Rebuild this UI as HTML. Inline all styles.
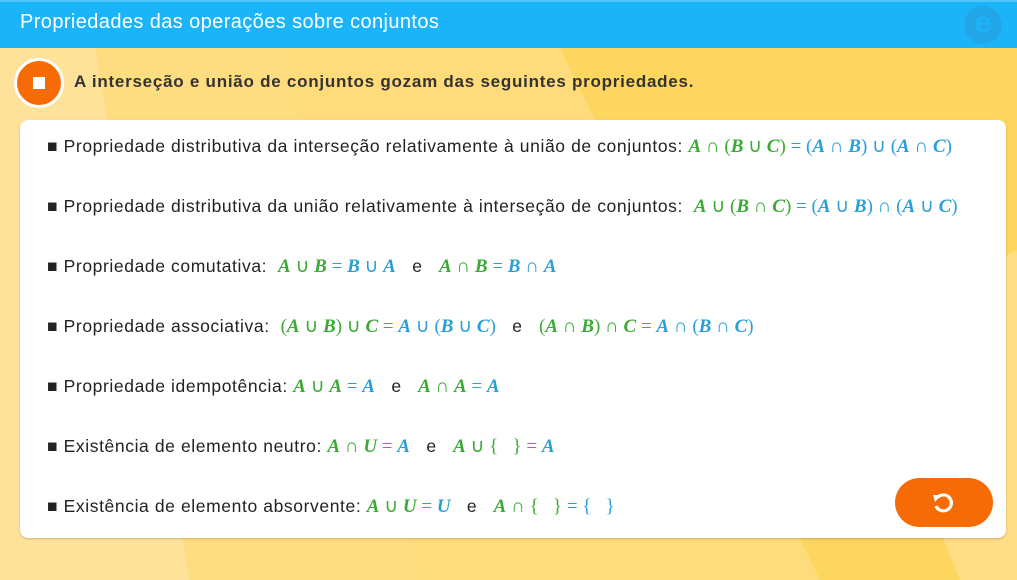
<!DOCTYPE html>
<html><head><meta charset="utf-8"><style>
body{margin:0;width:1017px;height:580px;overflow:hidden;font-family:"Liberation Sans",sans-serif;position:relative;background:#fdd660}
.bg{position:absolute;inset:0;overflow:hidden}
.hdr{position:absolute;left:0;top:0;width:1017px;height:48px;background:#1cb4f9;border-top:2px solid #4fc6f7;box-sizing:border-box}
.hdr span{position:absolute;left:20px;top:9px;color:#fff;font-size:20px;letter-spacing:0.4px}
.logo{position:absolute;left:964px;top:4px;width:38px;height:38px;border-radius:50%;background:#22a6e8;color:#1cb4f9;font-weight:bold;font-size:30px;text-align:center;line-height:34px}
.circ{position:absolute;left:14px;top:58px;width:44px;height:44px;border-radius:50%;background:#f76b07;border:3px solid #fff;box-sizing:content-box}
.circ i{position:absolute;left:16px;top:16px;width:12px;height:12px;background:#fff}
.title{position:absolute;left:74px;top:72px;font-size:17px;font-weight:bold;color:#333;letter-spacing:0.75px}
.card{position:absolute;left:20px;top:120px;width:986px;height:418px;background:#fff;border-radius:8px;box-shadow:0 1px 2px rgba(0,0,0,.2)}
.row{position:absolute;left:27px;font-size:17.5px;color:#222;white-space:nowrap;letter-spacing:0.6px}
.m{font-family:"Liberation Serif",serif;font-size:19px;letter-spacing:0}
.g{color:#3aaa35}.b{color:#2a9fd6}
.m i{font-weight:bold}
.btn{position:absolute;left:895px;top:478px;width:98px;height:49px;border-radius:25px;background:#f76b07}
</style></head><body>
<div class="bg"><svg width="1017" height="580" style="position:absolute;left:0;top:0">
<polygon points="0,48 95,48 190,580 0,580" fill="#fee29a"/>
<polygon points="95,48 280,48 420,580 190,580" fill="#fedd80"/>
<polygon points="280,48 560,48 820,580 420,580" fill="#fedc7c"/>
<polygon points="860,330 1017,250 1017,580 960,580" fill="#fedd85"/>
</svg></div>
<div class="hdr"><span>Propriedades das operações sobre conjuntos</span><div class="logo">e</div></div>
<div class="circ"><i></i></div>
<div class="title">A interseção e união de conjuntos gozam das seguintes propriedades.</div>
<div class="card">
<div class="row" style="top:15px">■ Propriedade distributiva da interseção relativamente à união de conjuntos: <span class="m"><span class="g"><i>A</i> ∩ (<i>B</i> ∪ <i>C</i>)</span> <span class="b">= (<i>A</i> ∩ <i>B</i>) ∪ (<i>A</i> ∩ <i>C</i>)</span></span></div>
<div class="row" style="top:75px">■ Propriedade distributiva da união relativamente à interseção de conjuntos:&nbsp; <span class="m"><span class="g"><i>A</i> ∪ (<i>B</i> ∩ <i>C</i>)</span> <span class="b">= (<i>A</i> ∪ <i>B</i>) ∩ (<i>A</i> ∪ <i>C</i>)</span></span></div>
<div class="row" style="top:135px">■ Propriedade comutativa:&nbsp; <span class="m"><span class="g"><i>A</i> ∪ <i>B</i></span> <span class="b">= <i>B</i> ∪ <i>A</i></span></span> &nbsp; e &nbsp; <span class="m"><span class="g"><i>A</i> ∩ <i>B</i></span> <span class="b">= <i>B</i> ∩ <i>A</i></span></span></div>
<div class="row" style="top:195px">■ Propriedade associativa:&nbsp; <span class="m"><span class="g">(<i>A</i> ∪ <i>B</i>) ∪ <i>C</i></span> <span class="b">= <i>A</i> ∪ (<i>B</i> ∪ <i>C</i>)</span></span> &nbsp; e &nbsp; <span class="m"><span class="g">(<i>A</i> ∩ <i>B</i>) ∩ <i>C</i></span> <span class="b">= <i>A</i> ∩ (<i>B</i> ∩ <i>C</i>)</span></span></div>
<div class="row" style="top:255px">■ Propriedade idempotência: <span class="m"><span class="g"><i>A</i> ∪ <i>A</i></span> <span class="b">= <i>A</i></span></span> &nbsp; e &nbsp; <span class="m"><span class="g"><i>A</i> ∩ <i>A</i></span> <span class="b">= <i>A</i></span></span></div>
<div class="row" style="top:315px">■ Existência de elemento neutro: <span class="m"><span class="g"><i>A</i> ∩ <i>U</i></span> <span class="b">= <i>A</i></span></span> &nbsp; e &nbsp; <span class="m"><span class="g"><i>A</i> ∪ {&nbsp;&nbsp; }</span> <span class="b">= <i>A</i></span></span></div>
<div class="row" style="top:375px">■ Existência de elemento absorvente: <span class="m"><span class="g"><i>A</i> ∪ <i>U</i></span> <span class="b">= <i>U</i></span></span> &nbsp; e &nbsp; <span class="m"><span class="g"><i>A</i> ∩ {&nbsp;&nbsp; }</span> <span class="b">= {&nbsp;&nbsp; }</span></span></div>
</div>
<div class="btn"><svg width="98" height="49" viewBox="0 0 98 49"><path d="M42.5 19.5 A8 8 0 1 1 41 28" fill="none" stroke="#fff" stroke-width="3.2"/><polygon points="38,17 46,17 40,24" fill="#fff"/></svg></div>
</body></html>
